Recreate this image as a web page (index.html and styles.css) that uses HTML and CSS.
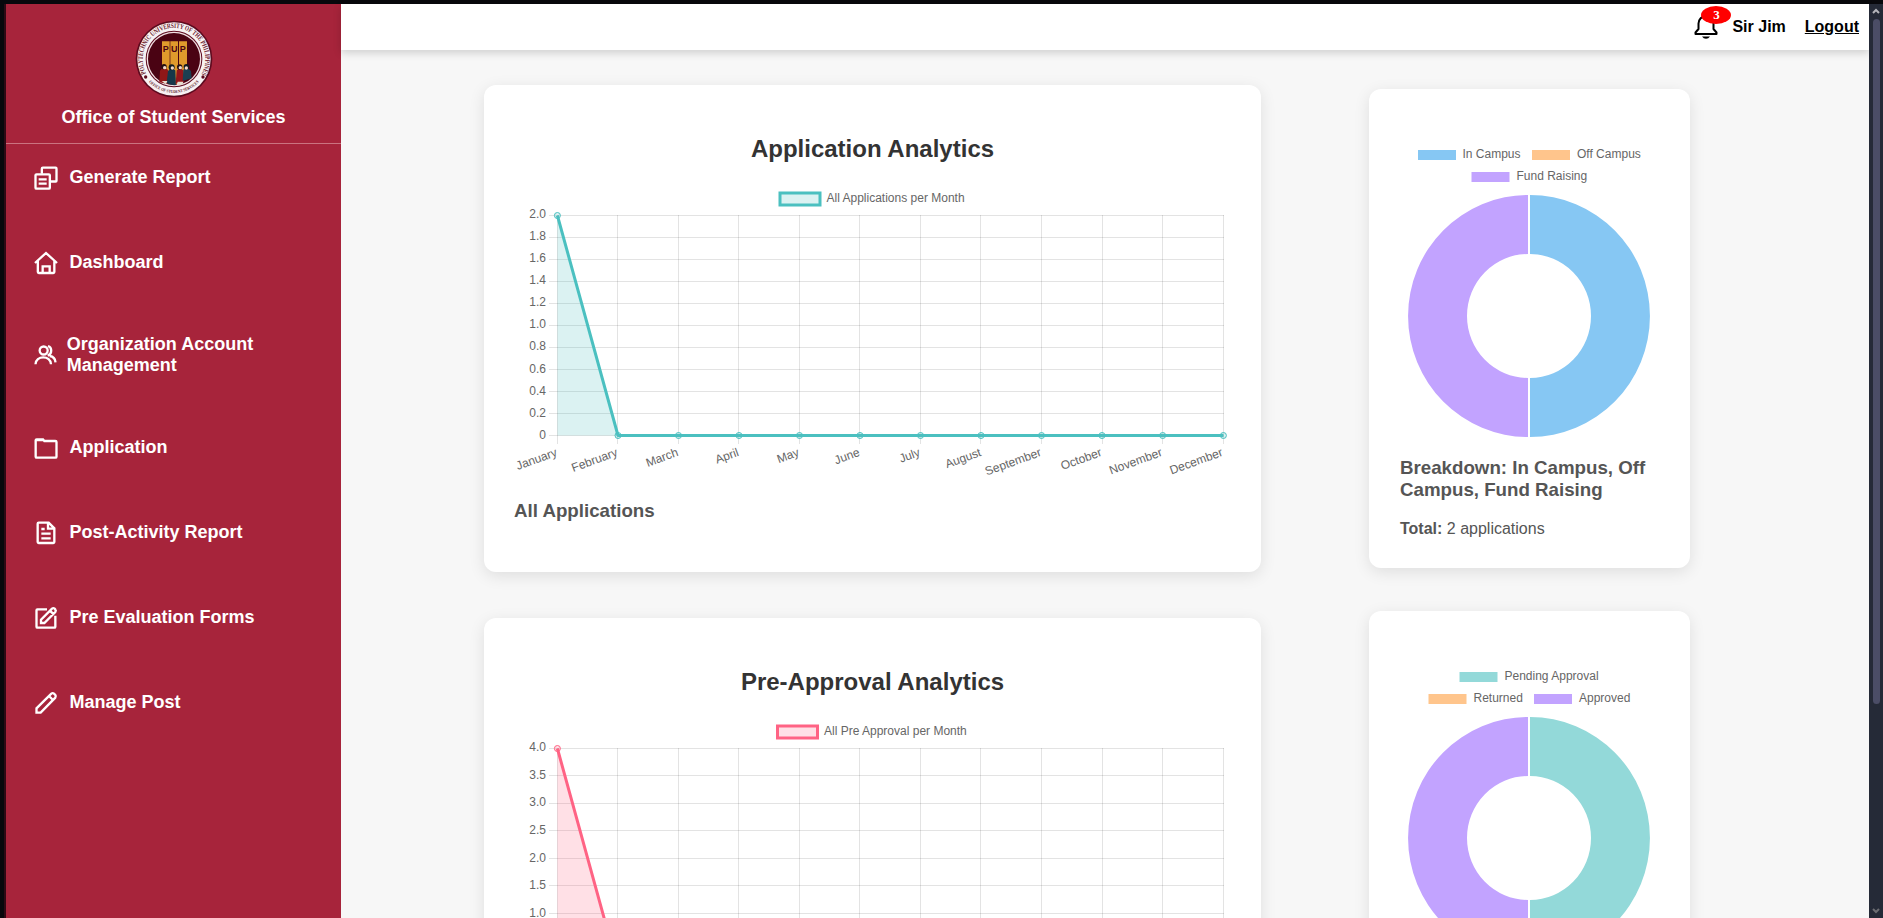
FILE: index.html
```html
<!DOCTYPE html>
<html lang="en">
<head>
<meta charset="utf-8">
<title>Office of Student Services</title>
<link rel="stylesheet" href="styles.css">
</head>
<body>
<div class="app">
  <aside class="sidebar">
    <div class="brand">
      <svg class="logo" viewBox="-117 -117 234 234">
        <defs>
          <path id="ringTop" d="M-84 43A94 94 0 1 1 84 43"/>
          <path id="ringBottom" d="M-78 66A103 103 0 0 0 78 66"/>
        </defs>
        <circle r="115" fill="#5d0a1e"/>
        <circle r="110" fill="#f7f2f3"/>
        <circle r="85" fill="#5d0a1e"/>
        <circle r="82" fill="#f0dfe2"/>
        <circle r="78" fill="#4a0313"/>
        <path d="M-36 -53h23V60h-23zM-11 -53h23V75h-23zM15 -53h24V60H15z" fill="#e09a2c"/>
        <text class="logo-word" x="-34" y="-20">PUP</text>
        <path d="M-44 70L-42 35Q-38 26-28 27Q-18 28-16 40L-18 75Z" fill="#8f1717"/>
        <path d="M-22 72L-18 36Q-8 24 4 34L6 78Q-8 80-22 72Z" fill="#16384a"/>
        <path d="M5 74L8 34Q18 24 28 34L29 70Z" fill="#94161b"/>
        <path d="M26 66L28 32Q40 22 51 36L53 58Z" fill="#1b3f52"/>
        <path d="M-37 66h17l-4 10zM11 68h17l-3 10H8z" fill="#e6ded0"/>
        <circle cx="-30" cy="23" r="8" fill="#251012"/><circle cx="-28" cy="26" r="5" fill="#f2d9cb"/>
        <circle cx="-7" cy="25" r="9" fill="#111b22"/><circle cx="-5" cy="27" r="5" fill="#f2d9cb"/>
        <circle cx="17" cy="24" r="8" fill="#251012"/><circle cx="19" cy="26" r="5" fill="#f2d9cb"/>
        <circle cx="37" cy="23" r="8" fill="#111b22"/><circle cx="37" cy="27" r="5" fill="#f2d9cb"/>
        <circle cx="-85" cy="54" r="5" fill="#5d0a1e"/><circle cx="87" cy="54" r="5" fill="#5d0a1e"/>
        <text class="ring-top"><textPath href="#ringTop" textLength="386" lengthAdjust="spacingAndGlyphs">POLYTECHNIC UNIVERSITY OF THE PHILIPPINES</textPath></text>
        <text class="ring-bottom"><textPath href="#ringBottom" startOffset="4" textLength="168" lengthAdjust="spacingAndGlyphs">OFFICE OF STUDENT SERVICES</textPath></text>
      </svg>
      <div class="brand-name">Office of Student Services</div>
    </div>
    <nav class="menu">
      <a class="item"><svg class="icon" viewBox="0 0 84 84"><rect x="10.5" y="31" width="43" height="43" rx="3"/><path d="M29.5 29V14Q29.5 11 32.5 11H71Q73.500 11 73.500 14V50Q73.500 52.500 71 52.500H56M20 46H44M20 59H44"/></svg><span>Generate Report</span></a>
      <a class="item"><svg class="icon" viewBox="0 0 84 84"><path d="M9 42L42 12L75 42M17.500 36V69Q17.500 72 20.500 72H64Q67 72 67 69V36M32 72V52H53V72"/></svg><span>Dashboard</span></a>
      <a class="item item-tall"><svg class="icon icon-narrow" viewBox="0 0 78 84"><circle cx="35" cy="28.500" r="12"/><path d="M10.500 70C10.500 42 57 42 57 70M48 15C61 19 61 39 47 44M53 45C65 47 70 53 70.500 64"/></svg><span>Organization Account Management</span></a>
      <a class="item"><svg class="icon" viewBox="0 0 84 84"><path d="M11 19Q11 16 14 16H33L37 21H70Q73.500 21 73.500 24V68Q73.500 71 70 71H14Q11 71 11 68ZM12 18.500H35"/></svg><span>Application</span></a>
      <a class="item"><svg class="icon" viewBox="0 0 84 84"><path d="M20 11H50L67 28V69Q67 72 64 72H20Q17 72 17 69V14Q17 11 20 11ZM48 11V29H67M28 30H38M28 44H56M28 58H56"/></svg><span>Post-Activity Report</span></a>
      <a class="item"><svg class="icon" viewBox="0 0 84 84"><path d="M45 16H16Q13.500 16 13.500 19V68Q13.500 71 16 71H67Q70 71 70 68V35M27 57V47L60 14Q64 11 68 14L70 17Q73 20 70 24L37 57ZM54 20L65 31"/></svg><span>Pre Evaluation Forms</span></a>
      <a class="item"><svg class="icon" viewBox="0 0 84 84"><path d="M13.500 71V58L58 14Q62 11 66 14L70 18Q73 22 70 26L26 71ZM51 21L63 33"/></svg><span>Manage Post</span></a>
    </nav>
  </aside>

  <div class="page">
    <header class="topbar">
      <div class="bell-wrap">
        <svg class="bell" viewBox="0 0 24 24"><path d="M1.500 19V17.500L4.500 14V8.500A7.500 7.500 0 0 1 19.500 8.500V14L22.500 17.500V19Z"/><path class="clapper" d="M8 21.500H16Q14.500 23.700 12 23.700T8 21.500Z"/></svg>
        <span class="badge">3</span>
      </div>
      <span class="user">Sir Jim</span>
      <a class="logout">Logout</a>
    </header>

    <main class="content">
      <div class="column">
        <section class="card card-line">
          <h2>Application Analytics</h2>
          <svg class="chart" width="717" height="295" viewBox="0 0 717 295">
            <rect class="key" x="266" y="8" width="40" height="12" fill="#dbf2f2" stroke="#4bc0c0"/>
            <text x="312.500" y="17">All Applications per Month</text>
            <path class="grid" d="M35 30.500H710M35 52.500H710M35 74.500H710M35 96.500H710M35 118.500H710M35 140.500H710M35 162.500H710M35 184.500H710M35 206.500H710M35 228.500H710M35 250.500H710M43.500 30V259M103.500 30V259M164.500 30V259M224.500 30V259M285.500 30V259M345.500 30V259M406.500 30V259M466.500 30V259M527.500 30V259M588.500 30V259M648.500 30V259M709.500 30V259"/>
            <g class="y-labels"><text x="32" y="32.500">2.0</text><text x="32" y="55">1.8</text><text x="32" y="77">1.6</text><text x="32" y="99">1.4</text><text x="32" y="121">1.2</text><text x="32" y="143">1.0</text><text x="32" y="165">0.8</text><text x="32" y="188">0.6</text><text x="32" y="210">0.4</text><text x="32" y="232">0.2</text><text x="32" y="254">0</text></g>
            <g class="x-labels">
              <text transform="translate(44 270.500) rotate(-20)">January</text><text transform="translate(104.500 270.500) rotate(-20)">February</text><text transform="translate(165 270.500) rotate(-20)">March</text><text transform="translate(225.500 270.500) rotate(-20)">April</text><text transform="translate(286 270.500) rotate(-20)">May</text><text transform="translate(346.500 270.500) rotate(-20)">June</text><text transform="translate(407 270.500) rotate(-20)">July</text><text transform="translate(468 270.500) rotate(-20)">August</text><text transform="translate(528 270.500) rotate(-20)">September</text><text transform="translate(588.500 270.500) rotate(-20)">October</text><text transform="translate(649 270.500) rotate(-20)">November</text><text transform="translate(709.500 270.500) rotate(-20)">December</text>
            </g>
            <path d="M43.400 30.500L104 250.500H43.400Z" fill="#4bc0c0" fill-opacity=".2"/>
            <path class="series" d="M43.400 30.500L104 250.500H709.500" stroke="#4bc0c0"/>
            <g class="points" stroke="#4bc0c0" fill="#4bc0c0"><circle cx="43.400" cy="30.500" r="3"/><circle cx="104" cy="250.500" r="3"/><circle cx="164.500" cy="250.500" r="3"/><circle cx="225" cy="250.500" r="3"/><circle cx="285.500" cy="250.500" r="3"/><circle cx="346" cy="250.500" r="3"/><circle cx="406.500" cy="250.500" r="3"/><circle cx="467" cy="250.500" r="3"/><circle cx="527.500" cy="250.500" r="3"/><circle cx="588" cy="250.500" r="3"/><circle cx="648.700" cy="250.500" r="3"/><circle cx="709.400" cy="250.500" r="3"/></g>
          </svg>
          <h3>All Applications</h3>
        </section>

        <section class="card card-line">
          <h2>Pre-Approval Analytics</h2>
          <svg class="chart" width="717" height="295" viewBox="0 0 717 295">
            <rect class="key" x="263.500" y="8" width="40" height="12" fill="#ffe0e6" stroke="#ff6384"/>
            <text x="310" y="17">All Pre Approval per Month</text>
            <path class="grid" d="M35 30.500H710M35 57.500H710M35 85.500H710M35 112.500H710M35 140.500H710M35 167.500H710M35 195.500H710M35 222.500H710M35 250.500H710M43.500 30V259M103.500 30V259M164.500 30V259M224.500 30V259M285.500 30V259M345.500 30V259M406.500 30V259M466.500 30V259M527.500 30V259M588.500 30V259M648.500 30V259M709.500 30V259"/>
            <g class="y-labels"><text x="32" y="33">4.0</text><text x="32" y="61">3.5</text><text x="32" y="88">3.0</text><text x="32" y="116">2.5</text><text x="32" y="144">2.0</text><text x="32" y="171">1.5</text><text x="32" y="199">1.0</text></g>
            <path d="M43.400 30.500L104 250.500H43.400Z" fill="#ff6384" fill-opacity=".2"/>
            <path class="series" d="M43.400 30.500L104 250.500H709.500" stroke="#ff6384"/>
            <g class="points" stroke="#ff6384" fill="#ff6384"><circle cx="43.400" cy="30.500" r="3"/></g>
          </svg>
        </section>
      </div>

      <div class="column column-side">
        <section class="card card-round">
          <svg class="chart" width="261" height="330" viewBox="0 0 261 330">
            <rect x="19" y="31" width="38" height="10" fill="#86c7f3"/><text x="63.500" y="39">In Campus</text>
            <rect x="133" y="31" width="38" height="10" fill="#ffc58c"/><text x="178" y="39">Off Campus</text>
            <rect x="72.500" y="53" width="38" height="10" fill="#c2a3ff"/><text x="117.500" y="61">Fund Raising</text>
            <path d="M131 76A120 121 0 0 1 131 318V259A61 62 0 0 0 131 135Z" fill="#86c7f3"/>
            <path d="M129 76A120 121 0 0 0 129 318V259A61 62 0 0 1 129 135Z" fill="#c2a3ff"/>
          </svg>
          <h3>Breakdown: In Campus, Off Campus, Fund Raising</h3>
          <p><strong>Total:</strong> 2 applications</p>
        </section>

        <section class="card card-round">
          <svg class="chart" width="261" height="330" viewBox="0 0 261 330">
            <rect x="60.500" y="31" width="38" height="10" fill="#93d9d9"/><text x="105.500" y="39">Pending Approval</text>
            <rect x="29.500" y="53" width="38" height="10" fill="#ffc58c"/><text x="74.500" y="61">Returned</text>
            <rect x="135" y="53" width="38" height="10" fill="#c2a3ff"/><text x="180" y="61">Approved</text>
            <path d="M131 76A120 121 0 0 1 131 318V259A61 62 0 0 0 131 135Z" fill="#93d9d9"/>
            <path d="M129 76A120 121 0 0 0 129 318V259A61 62 0 0 1 129 135Z" fill="#c2a3ff"/>
          </svg>
        </section>
      </div>
    </main>
  </div>

  <div class="scrollbar">
    <svg width="8" height="6" viewBox="0 0 8 6"><path d="M1 5L4 2L7 5" stroke="#b4b4ba"/></svg>
    <div class="thumb"></div>
    <svg width="8" height="6" viewBox="0 0 8 6"><path d="M1 1L4 4L7 1" stroke="#6c6d72"/></svg>
  </div>
</div>
</body>
</html>
```

FILE: styles.css
```css
* { box-sizing: border-box; }

body {
  margin: 0;
  height: 918px;
  overflow: hidden;
  background: #08080c;
  font-family: "Liberation Sans", Arial, sans-serif;
}

.app {
  display: flex;
  height: 918px;
  padding: 4px 0 0 4px;
}

.sidebar {
  width: 337px;
  flex: none;
  border-left: 2px solid #2e0a15;
  background: #a7243b;
  color: #fff;
  font-size: 18px;
  font-weight: bold;
}

.brand {
  display: flex;
  flex-direction: column;
  align-items: center;
  height: 140px;
  padding-top: 16px;
  border-bottom: 1px solid #cb7380;
}

.logo { width: 78px; height: 78px; }
.logo-word { font: bold 27px "Liberation Sans", Arial, sans-serif; letter-spacing: 7px; fill: #4a0313; }
.ring-top { font: bold 21px "Liberation Serif", serif; fill: #6b1a2c; }
.ring-bottom { font: bold 13px "Liberation Serif", serif; fill: #5d1b2b; }
.brand-name { margin-top: 9px; line-height: 20px; }

.menu { display: flex; flex-direction: column; }

.item {
  display: flex;
  align-items: center;
  gap: 9.200px;
  height: 85px;
  padding: 0 60px 0 26.300px;
  line-height: 21px;
}

.item:first-child { height: 67px; margin-bottom: 9px; }
.item-tall { height: 100px; gap: 8.500px; }

.icon {
  width: 28px;
  height: 28px;
  flex: none;
  fill: none;
  stroke: #fff;
  stroke-width: 7;
}

.icon-narrow { width: 26px; }

.page {
  display: flex;
  flex-direction: column;
  width: 1528px;
  flex: none;
  background: #f7f7f7;
}

.topbar {
  display: flex;
  align-items: center;
  justify-content: flex-end;
  height: 46px;
  flex: none;
  padding: 0 10px 1px 0;
  background: #fff;
  box-shadow: 0 3px 8px rgba(0, 0, 0, .16);
  color: #000;
  font-size: 16px;
  font-weight: bold;
}

.bell-wrap { position: relative; width: 24px; height: 24px; margin-right: 14px; }
.bell { display: block; width: 24px; height: 24px; fill: none; stroke: #000; stroke-width: 2; stroke-linejoin: round; }
.bell .clapper { fill: #000; stroke: none; }

.badge {
  position: absolute;
  left: 7px;
  top: -8.500px;
  width: 30px;
  height: 18px;
  border-radius: 50%;
  background: #f00;
  color: #fff;
  font: bold 13px/18px "Liberation Serif", serif;
  text-align: center;
}

.user { margin-right: 19px; }
.logout { text-decoration: underline; }

.content {
  display: flex;
  gap: 108px;
  flex: 1;
  min-height: 0;
  padding: 35px 0 0 143px;
  overflow: hidden;
}

.column { display: flex; flex-direction: column; gap: 46px; }
.column-side { gap: 43px; padding-top: 4px; }

.card {
  flex: none;
  padding: 30px;
  border-radius: 12px;
  background: #fff;
  box-shadow: 0 4px 16px rgba(0, 0, 0, .1);
  color: #555;
}

.card-line { width: 777px; height: 487px; }
.card-round { width: 321px; height: 479px; }

h2 {
  margin: 20px 0 22px;
  color: #333;
  font-size: 24px;
  line-height: 28px;
  text-align: center;
}

h3 { margin: 0; font-size: 18.720px; line-height: 22px; }
.card-line h3 { margin-top: 20px; }
.card-round h3 { margin: 8px 0 0 1px; }
p { margin: 18px 0 0 1px; font-size: 16px; line-height: 20px; }

.chart { display: block; overflow: visible; font-size: 12px; fill: #666; }
.key { stroke-width: 3; }
.grid { stroke: rgba(0, 0, 0, .11); fill: none; }
.y-labels, .x-labels { text-anchor: end; }
.series { fill: none; stroke-width: 3; stroke-linejoin: round; }
.points { fill-opacity: .2; stroke-width: 1; }

.scrollbar {
  display: flex;
  flex-direction: column;
  align-items: center;
  justify-content: space-between;
  width: 14px;
  flex: none;
  padding: 4px 0;
  background: #252a37;
}

.scrollbar svg { fill: none; stroke-width: 2; }
.thumb { width: 7px; height: 685px; margin: 5px 0 auto; border-radius: 4px; background: #4b4d66; }
```
